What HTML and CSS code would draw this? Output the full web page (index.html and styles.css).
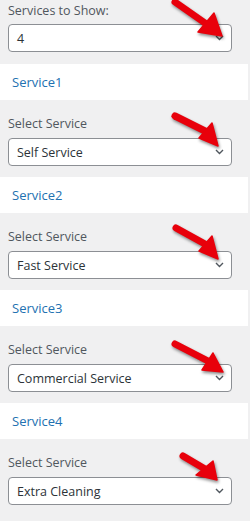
FILE: index.html
```html
<!DOCTYPE html>
<html lang="en">
<head>
  <meta charset="UTF-8"/>
  <meta name="viewport" content="width=device-width, initial-scale=1.0"/>
  <title>Services Widget</title>
  <link rel="stylesheet" href="styles.css">
</head>
<body>

  <div class="panel">

    <div class="field first">
      <label class="field-label">Services to Show:</label>
      <div class="select">
        <span>4</span>
        <svg class="chevron" width="9" height="6" viewBox="0 0 9 6"><path d="M1 1 L4.5 4.5 L8 1"/></svg>
      </div>
      <svg class="pointer" width="65" height="50" viewBox="0 0 65 50">
        <path class="shaft" d="M10 9 L40 30"/>
        <polygon class="head" points="33,39 49,20 57,43"/>
      </svg>
    </div>

    <div class="service-head"><a href="#">Service1</a></div>
    <div class="field">
      <label class="field-label">Select Service</label>
      <div class="select">
        <span>Self Service</span>
        <svg class="chevron" width="9" height="6" viewBox="0 0 9 6"><path d="M1 1 L4.5 4.5 L8 1"/></svg>
      </div>
      <svg class="pointer" width="65" height="50" viewBox="0 0 65 50">
        <path class="shaft" d="M10 9 L40 24"/>
        <polygon class="head" points="34,31 47,16 53,39"/>
      </svg>
    </div>

    <div class="service-head"><a href="#">Service2</a></div>
    <div class="field">
      <label class="field-label">Select Service</label>
      <div class="select">
        <span>Fast Service</span>
        <svg class="chevron" width="9" height="6" viewBox="0 0 9 6"><path d="M1 1 L4.5 4.5 L8 1"/></svg>
      </div>
      <svg class="pointer" width="65" height="50" viewBox="0 0 65 50">
        <path class="shaft" d="M11 8 L40 24"/>
        <polygon class="head" points="34,31 47,16 53,39"/>
      </svg>
    </div>

    <div class="service-head"><a href="#">Service3</a></div>
    <div class="field">
      <label class="field-label">Select Service</label>
      <div class="select">
        <span>Commercial Service</span>
        <svg class="chevron" width="9" height="6" viewBox="0 0 9 6"><path d="M1 1 L4.5 4.5 L8 1"/></svg>
      </div>
      <svg class="pointer" width="65" height="50" viewBox="0 0 65 50">
        <path class="shaft" d="M10 11 L43 28"/>
        <polygon class="head" points="37,37 48,20 58,39"/>
      </svg>
    </div>

    <div class="service-head"><a href="#">Service4</a></div>
    <div class="field">
      <label class="field-label">Select Service</label>
      <div class="select">
        <span>Extra Cleaning</span>
        <svg class="chevron" width="9" height="6" viewBox="0 0 9 6"><path d="M1 1 L4.5 4.5 L8 1"/></svg>
      </div>
      <svg class="pointer" width="65" height="50" viewBox="0 0 65 50">
        <path class="shaft" d="M18 10 L40 23"/>
        <polygon class="head" points="31,29 48,15 52,34"/>
      </svg>
    </div>

  </div>

</body>
</html>
```

FILE: styles.css
```css
* {
  margin: 0;
  padding: 0;
  box-sizing: border-box;
}

body {
  background: #f0f0f1;
  font-family: "Open Sans", "Noto Sans", sans-serif;
  font-size: 13px;
  color: #3c434a;
}

.panel {
  width: 248px;
}

.field {
  position: relative;
  padding: 16px 16px 11px 8px;
}

.field.first {
  padding-top: 3px;
  padding-bottom: 12px;
}

.field-label {
  display: block;
  height: 16px;
  line-height: 16px;
  margin-bottom: 6px;
  font-size: 12.5px;
  color: #50575e;
}

.field.first .field-label {
  margin-bottom: 5px;
}

.select {
  width: 224px;
  height: 28px;
  padding: 0 7px 0 8px;
  background: #fff;
  border: 1px solid #8c8f94;
  border-radius: 4px;
  display: flex;
  align-items: center;
  justify-content: space-between;
  font-size: 12.5px;
  color: #2c3338;
}

.chevron path {
  fill: none;
  stroke: #50575e;
  stroke-width: 1.4;
}

.service-head {
  height: 36px;
  background: #fff;
  padding-left: 12px;
  display: flex;
  align-items: center;
}

.service-head a {
  color: #2271b1;
  text-decoration: none;
  font-size: 13px;
}

/* red callout arrows drawn over the dropdowns */
.pointer {
  position: absolute;
  left: 165px;
  bottom: 20px;
  overflow: visible;
  filter: drop-shadow(1px 2px 1.5px rgba(0, 0, 0, 0.45));
}

.field.first .pointer {
  bottom: 21px;
}

.pointer .shaft {
  fill: none;
  stroke: #e8000b;
  stroke-width: 7;
  stroke-linecap: round;
}

.pointer .head {
  fill: #e8000b;
  stroke: #e8000b;
  stroke-width: 1.5;
  stroke-linejoin: round;
}
```
